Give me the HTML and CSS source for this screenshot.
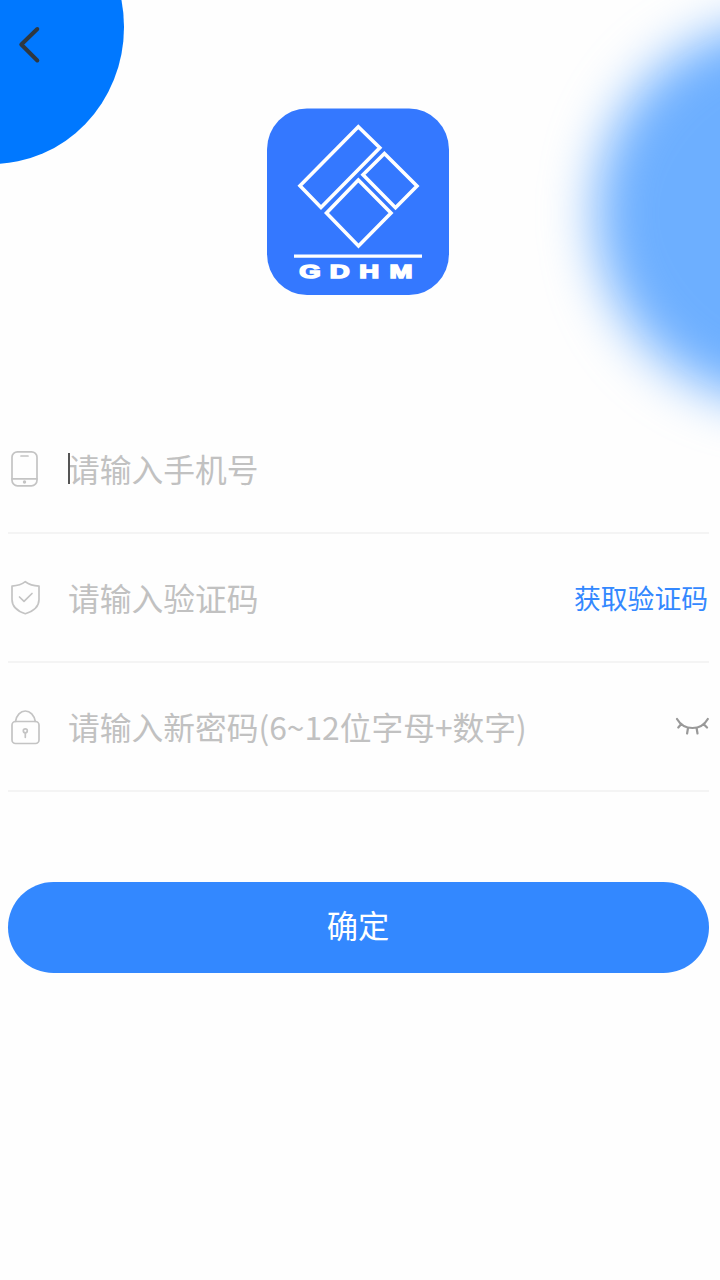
FILE: index.html
```html
<!DOCTYPE html>
<html lang="zh-CN">
<head>
<meta charset="utf-8">
<title>GDHM</title>
<link rel="stylesheet" href="styles.css">
</head>
<body>
<main class="page">
  <div class="corner"></div>
  <div class="glow"></div>
  <header class="header">
    <svg class="back" viewBox="0 0 24 40"><path d="M20.300 4 4.300 19.500 20.300 35.500"/></svg>
  </header>
  <section class="brand">
    <svg class="logo" viewBox="0 0 182 187">
      <rect class="logo-bg" y="0.500" width="182" height="186.500" rx="40" ry="41"/>
      <g class="logo-lines">
        <path d="M91.300 18.800 112.800 39.800 54 99.500 33 77.800Z"/>
        <path d="M117.400 45.500 150 78 128.500 99.800 96 66.800Z"/>
        <path d="M91.300 72 124 105 91.500 138 59.500 105Z"/>
      </g>
      <path class="logo-rule" d="M27 148.200H155"/>
      <text class="logo-name" transform="scale(1.45 1)" y="170.500"><tspan x="22.200">G</tspan><tspan x="43.200">D</tspan><tspan x="63.700">H</tspan><tspan x="84.500">M</tspan></text>
    </svg>
  </section>
  <form class="form">
    <div class="field">
      <svg class="icon" viewBox="0 0 34 40"><rect x="4" y="2.800" width="25" height="34" rx="5.500"/><path d="M4 29.800H29M13 7H20"/><circle class="dot" cx="16.500" cy="33" r="1.700"/></svg>
      <span class="hint focused">请输入手机号</span>
    </div>
    <div class="field">
      <svg class="icon" viewBox="0 0 34 40"><path d="M17.300 3.700C13.500 6.800 9.500 7.800 4 8.100V21.500C4 28 9 33 17.300 35.700 26 33 31 28 31 21.500V8.100C25.500 7.800 21.500 6.800 17.300 3.700ZM11.500 19 16 23.300 24 15.500"/></svg>
      <span class="hint">请输入验证码</span>
      <a class="code">获取验证码</a>
    </div>
    <div class="field">
      <svg class="icon" viewBox="0 0 34 40"><rect x="4" y="14.500" width="27" height="22" rx="3.500"/><path d="M7.500 14.500C8.500 8 12.500 4 17.300 4S26.300 8 27.300 14.500M17.300 26V30.300"/><circle cx="17.300" cy="23.800" r="2"/></svg>
      <span class="hint">请输入新密码(6~12位字母+数字)</span>
      <svg class="eye" viewBox="0 0 34 20"><path d="M2 2C9 14 26 14 32.800 2M6.300 7 3.300 10.500M28.500 7 32 10.500M13 11 12.100 16.500M21.600 11 22.500 16.500"/></svg>
    </div>
    <button class="submit" type="button">确定</button>
  </form>
</main>
</body>
</html>
```
FILE: styles.css
```css
* { box-sizing: border-box; }
body {
  margin: 0;
  background: #fefefe;
  font-family: "Noto Sans CJK SC", sans-serif;
}
.page {
  position: relative;
  height: 1280px;
  overflow: hidden;
  display: flex;
  flex-direction: column;
}
.corner, .glow { position: absolute; border-radius: 50%; }
.corner {
  left: -140px;
  top: -110px;
  width: 263.500px;
  height: 273.500px;
  background: #0078ff;
}
.glow {
  left: 596px;
  top: 22px;
  width: 382px;
  height: 382px;
  background: #6dafff;
  filter: blur(26px);
}
.header {
  position: relative;
  height: 108px;
  padding: 25px 0 0 17px;
}
.back {
  display: block;
  width: 24px;
  height: 40px;
  fill: none;
  stroke: #2f3840;
  stroke-width: 4;
  stroke-linecap: round;
  stroke-linejoin: round;
}
.brand {
  position: relative;
  height: 297px;
  padding-left: 267px;
}
.logo { display: block; width: 182px; height: 187px; }
.logo-bg { fill: #3478ff; }
.logo-lines, .logo-rule { fill: none; stroke: #fff; stroke-width: 3.600; }
.logo-rule { stroke-width: 3.200; }
.logo-name {
  fill: #fff;
  stroke: #fff;
  stroke-width: 1.500;
  font: 900 19px "Liberation Sans", sans-serif;
}
.form {
  position: relative;
  display: flex;
  flex-direction: column;
  padding: 0 11px 0 8px;
}
.field {
  display: flex;
  align-items: center;
  height: 129px;
  padding-top: 1px;
  border-bottom: 2px solid #f4f4f4;
}
.icon {
  width: 34px;
  height: 40px;
  margin-right: 26px;
  fill: none;
  stroke: #c4c4c4;
  stroke-width: 1.700;
  stroke-linecap: round;
  stroke-linejoin: round;
}
.dot { fill: #c4c4c4; stroke: none; }
.hint {
  position: relative;
  flex: 1;
  padding-bottom: 2px;
  font-size: 31.750px;
  line-height: 40px;
  color: #c1c1c1;
  white-space: nowrap;
}
.focused::before {
  content: "";
  position: absolute;
  left: 0;
  top: 5px;
  width: 2px;
  height: 31px;
  background: #555;
}
.code {
  margin-right: 1px;
  font-size: 26.800px;
  line-height: 36px;
  color: #3388ff;
}
.eye {
  width: 34px;
  height: 20px;
  fill: none;
  stroke: #999;
  stroke-width: 2.200;
  stroke-linecap: round;
}
.submit {
  height: 91px;
  margin-top: 90px;
  padding: 0 1px 6px 0;
  border: 0;
  border-radius: 46px;
  background: #3388ff;
  color: #fff;
  font: 31.300px "Noto Sans CJK SC", sans-serif;
}
```
